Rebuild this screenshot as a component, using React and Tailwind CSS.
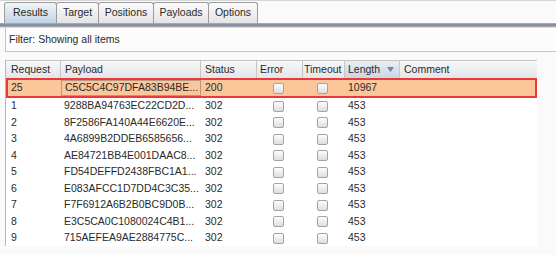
import { useState } from 'react'

const tabs = [
  { name: 'Results', w: 'w-[53px]' },
  { name: 'Target', w: 'w-[43px]' },
  { name: 'Positions', w: 'w-[56px]' },
  { name: 'Payloads', w: 'w-[56px]' },
  { name: 'Options', w: 'w-[50px]' },
]

const rows = [
  ['1', '9288BA94763EC22CD2D...'],
  ['2', '8F2586FA140A44E6620E...'],
  ['3', '4A6899B2DDEB6585656...'],
  ['4', 'AE84721BB4E001DAAC8...'],
  ['5', 'FD54DEFFD2438FBC1A1...'],
  ['6', 'E083AFCC1D7DD4C3C35...'],
  ['7', 'F7F6912A6B2B0BC9D0B...'],
  ['8', 'E3C5CA0C1080024C4B1...'],
  ['9', '715AEFEA9AE2884775C...'],
]

function Check() {
  return (
    <span className="block w-[11px] h-[11px] rounded-[2px] border border-[#a3a3a3] bg-gradient-to-b from-[#fdfdfd] to-[#dedede]" />
  )
}

export default function App() {
  const [active, setActive] = useState('Results')

  return (
    <div className="w-[556px] h-[255px] overflow-hidden bg-[#fafafa] font-['Liberation_Sans',Arial,sans-serif] text-[10.5px] text-[#2a2a2a]">
      <div className="h-px bg-[#d6d6d6]" />

      {/* tabs */}
      <div className="flex items-end h-[22px] pl-[4px]">
        {tabs.map((t) => (
          <button
            key={t.name}
            onClick={() => setActive(t.name)}
            className={`${t.w} h-[21px] flex items-center justify-center border border-b-0 border-[#9c9c9c] -ml-px first:ml-0 rounded-t-[3px] ${
              active === t.name
                ? 'bg-gradient-to-b from-[#f1f5f9] to-[#c3d3e3]'
                : 'bg-gradient-to-b from-[#fbfbfb] to-[#e4e4e4]'
            }`}
          >
            {t.name}
          </button>
        ))}
      </div>

      {/* divider band */}
      <div className="h-px bg-[#a4a9b1]" />
      <div className="h-[2px] bg-[#7f90a8]" />
      <div className="h-px bg-[#a9a1aa]" />
      <div className="h-px bg-[#dcdcdc]" />

      {/* filter */}
      <div className="ml-[5px] h-[24px] flex items-center pl-[3px] bg-[#fcfcfc] border-l border-b border-[#c4c4c4]">
        Filter: Showing all items
      </div>

      {/* table */}
      <div className="mt-[8px] ml-[5px] w-[532px] bg-white border-l border-[#b8b8b8] h-[186px]">
        <div className="flex h-[18px] border-t border-[#c4c4c4] bg-gradient-to-b from-[#f8f8f8] to-[#e3e5e9]">
          <div className="w-[55px] pl-[5px] flex items-center border-r border-[#c6c6c6]">Request</div>
          <div className="w-[140px] pl-[4px] flex items-center border-r border-[#c6c6c6]">Payload</div>
          <div className="w-[56px] pl-[4px] flex items-center border-r border-[#c6c6c6]">Status</div>
          <div className="w-[46px] pl-[3px] flex items-center border-r border-[#c6c6c6]">Error</div>
          <div className="w-[42px] pl-[1px] flex items-center border-r border-[#c6c6c6]">Timeout</div>
          <div className="w-[55px] pl-[3px] pr-[5px] flex items-center justify-between border-r border-[#c6c6c6] bg-gradient-to-b from-[#e8eef5] to-[#c9d6e4]">
            <span>Length</span>
            <svg width="7" height="5" viewBox="0 0 7 5">
              <path d="M0 0h7L3.5 5z" fill="#6b87aa" />
            </svg>
          </div>
          <div className="flex-1 pl-[4px] flex items-center">Comment</div>
        </div>

        <div className="flex h-[20px] items-stretch border-2 border-[#e8393d] bg-[#fcc69b]">
          <div className="w-[53px] pl-[3px] flex items-center">25</div>
          <div className="w-[140px] pl-[3px] flex items-center border border-[#b59a82]">C5C5C4C97DFA83B94BE...</div>
          <div className="w-[56px] pl-[4px] flex items-center">200</div>
          <div className="w-[46px] flex items-center justify-center pr-[4px]"><Check /></div>
          <div className="w-[42px] flex items-center justify-center pr-[4px]"><Check /></div>
          <div className="w-[55px] pl-[3px] flex items-center">10967</div>
          <div className="flex-1" />
        </div>

        {rows.map(([n, p]) => (
          <div key={n} className="flex h-[16.5px] items-center">
            <div className="w-[55px] pl-[5px]">{n}</div>
            <div className="w-[140px] pl-[3px]">{p}</div>
            <div className="w-[56px] pl-[4px]">302</div>
            <div className="w-[46px] flex justify-center pr-[4px]"><Check /></div>
            <div className="w-[42px] flex justify-center pr-[4px]"><Check /></div>
            <div className="w-[55px] pl-[3px]">453</div>
            <div className="flex-1" />
          </div>
        ))}
      </div>
    </div>
  )
}
